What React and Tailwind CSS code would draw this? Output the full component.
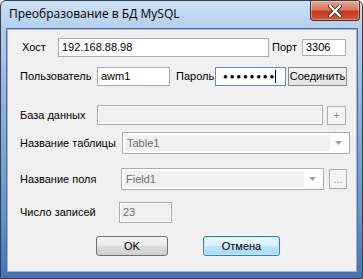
import React from 'react';

// Win7 "classic" dialog: MySQL conversion settings
const font = "font-['Liberation_Sans',Arial,sans-serif]";

function TextBox({ w, h, value, disabled, children, focus }) {
  return (
    <div
      className={
        'flex items-center border pl-[3px] text-[11px] leading-none ' +
        (disabled
          ? 'border-[#adadad] bg-[#f0f0f0] text-[#6d6d6d] shadow-[inset_0_0_0_1px_#ffffff]'
          : focus
          ? 'border-[#5e8fc4] bg-white text-black'
          : 'border-[#a9acb2] bg-white text-black')
      }
      style={{ width: w, height: h }}
    >
      {value}
      {children}
    </div>
  );
}

function Combo({ w, value }) {
  return (
    <div className="flex h-[22px] border border-[#adadad] bg-white p-[2px]" style={{ width: w }}>
      <div className="flex flex-1 items-center bg-[#f0f0f0] pl-[2px] text-[11px] leading-none text-[#6d6d6d]">
        {value}
      </div>
      <div className="flex w-[17px] items-center justify-center">
        <svg width="7" height="4" viewBox="0 0 7 4">
          <path d="M0 0H7L3.5 4Z" fill="#a2a2a2" />
        </svg>
      </div>
    </div>
  );
}

function SmallBtn({ w, h, children, disabled }) {
  return (
    <button
      className={
        'flex items-center justify-center border text-[11px] leading-none ' +
        (disabled
          ? 'border-[#adadad] bg-[#f4f4f4] text-[#8a8a8a]'
          : 'border-[#8d8d8d] bg-[linear-gradient(#f3f3f3,#e2e2e2)] text-black')
      }
      style={{ width: w, height: h }}
    >
      {children}
    </button>
  );
}

export default function App() {
  return (
    <div className={`${font} w-[363px] h-[279px] overflow-hidden`}>
      <div className="flex h-full w-full flex-col rounded-t-[6px] border border-[#34404f] bg-[linear-gradient(180deg,#cfe0f4_0%,#b4cdec_10%,#8eb0dc_40%,#6a94cb_75%,#4575b4_100%)]">
        {/* Title bar */}
        <div className="flex h-[28px] items-start">
          <div className="pl-[8px] pt-[6px] font-['Open_Sans',sans-serif] text-[12px] leading-[14px] text-black">
            Преобразование в БД MySQL
          </div>
          <div className="ml-auto mr-[2px] flex h-[20px] w-[50px] items-center justify-center rounded-b-[4px] border border-t-0 border-[#5a2b25] bg-[linear-gradient(180deg,#e8a492_0%,#d87a63_45%,#c1391f_55%,#d0583d_100%)] shadow-[inset_0_0_0_1px_rgba(255,255,255,0.35)]">
            <svg width="14" height="12" viewBox="0 0 14 12">
              <path d="M2 1L12 11M12 1L2 11" stroke="#4a2a24" strokeWidth="4" strokeLinecap="round" />
              <path d="M2 1L12 11M12 1L2 11" stroke="#ffffff" strokeWidth="2.4" strokeLinecap="round" />
            </svg>
          </div>
        </div>

        {/* Client area */}
        <div className="ml-[6px] flex h-[243px] w-[350px] flex-col border border-[#9fb6d4] bg-[#f0f0f0] text-[11px] text-black shadow-[0_0_0_1px_#4f6f9a]">
          {/* Host / Port */}
          <div className="mt-[8px] flex h-[19px] items-center pl-[14px]">
            <span className="w-[36px]">Хост</span>
            <TextBox w={211} h={19} value="192.168.88.98" />
            <span className="ml-[3px] w-[30px]">Порт</span>
            <TextBox w={44} h={17} value="3306" />
          </div>

          {/* User / Password */}
          <div className="mt-[10px] flex h-[19px] items-center pl-[12px]">
            <span className="w-[77px]">Пользователь</span>
            <TextBox w={73} h={19} value="awm1" />
            <span className="ml-[6px] w-[39px]">Пароль</span>
            <TextBox w={71} h={19} focus>
              <span className="ml-[4px] text-[8px] tracking-[1.8px]">●●●●●●●●</span>
              <span className="ml-[-1px] h-[13px] w-[1px] bg-black" />
            </TextBox>
            <div className="ml-[2px]">
              <SmallBtn w={59} h={19}>Соединить</SmallBtn>
            </div>
          </div>

          {/* Database */}
          <div className="mt-[19px] flex h-[20px] items-center pl-[12px]">
            <span className="w-[77px]">База данных</span>
            <TextBox w={226} h={20} disabled />
            <div className="ml-[4px]">
              <SmallBtn w={19} h={19} disabled>+</SmallBtn>
            </div>
          </div>

          {/* Table */}
          <div className="mt-[7px] flex h-[22px] items-center pl-[12px]">
            <span className="w-[102px]">Название таблицы</span>
            <Combo w={228} value="Table1" />
          </div>

          {/* Field */}
          <div className="mt-[14px] flex h-[22px] items-center pl-[12px]">
            <span className="w-[101px]">Название поля</span>
            <Combo w={203} value="Field1" />
            <div className="ml-[5px]">
              <SmallBtn w={18} h={20} disabled>...</SmallBtn>
            </div>
          </div>

          {/* Records */}
          <div className="mt-[12px] flex h-[21px] items-center pl-[12px]">
            <span className="w-[99px]">Число записей</span>
            <TextBox w={53} h={21} value="23" disabled />
          </div>

          {/* Buttons */}
          <div className="mt-[13px] flex h-[20px] items-center pl-[88px]">
            <button className="flex h-[20px] w-[72px] items-center justify-center rounded-[3px] border border-[#707070] bg-[linear-gradient(180deg,#f2f2f2_0%,#ebebeb_50%,#dddddd_50%,#cfcfcf_100%)] text-[11px] font-normal leading-none">
              OK
            </button>
            <button className="ml-[35px] flex h-[20px] w-[77px] items-center justify-center rounded-[3px] border border-[#3c7fb1] bg-[linear-gradient(180deg,#eaf6fd_0%,#d9f0fc_50%,#bee6fd_50%,#a7d9f5_100%)] text-[11px] leading-none shadow-[inset_0_0_0_1px_#c7e8fa]">
              Отмена
            </button>
          </div>
        </div>
      </div>
    </div>
  );
}
